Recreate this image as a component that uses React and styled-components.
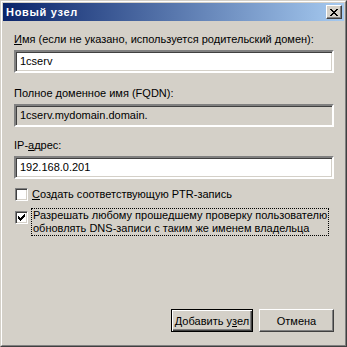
import React from "react";
import styled, { createGlobalStyle } from "styled-components";

const GlobalStyle = createGlobalStyle`
  html, body {
    margin: 0;
    padding: 0;
    background: #d4d0c8;
  }
  body {
    font-family: "Liberation Sans", Arial, sans-serif;
    font-size: 11px;
    color: #000;
  }
`;

const Window = styled.div`
  box-sizing: border-box;
  width: 347px;
  height: 347px;
  border: 1px solid;
  border-color: #d4d0c8 #404040 #404040 #d4d0c8;
  background: #d4d0c8;
`;

const WindowInner = styled.div`
  box-sizing: border-box;
  height: 100%;
  border: 1px solid;
  border-color: #ffffff #808080 #808080 #ffffff;
  padding: 1px;
  display: flex;
  flex-direction: column;
`;

const TitleBar = styled.div`
  height: 18px;
  flex: none;
  display: flex;
  align-items: center;
  justify-content: space-between;
  padding: 0 2px 0 3px;
  background: linear-gradient(to right, #0a246a, #a6caf0);
  color: #fff;
  font-weight: bold;
  letter-spacing: 0.7px;
`;

const CloseButton = styled.div`
  box-sizing: border-box;
  width: 16px;
  height: 14px;
  background: #d4d0c8;
  border: 1px solid;
  border-color: #ffffff #404040 #404040 #ffffff;
  box-shadow: inset -1px -1px 0 #808080;
  display: flex;
  align-items: center;
  justify-content: center;
`;

const Content = styled.div`
  flex: 1;
  display: flex;
  flex-direction: column;
  padding: 12px 10px 12px 11px;
`;

const Label = styled.div`
  line-height: 13px;
  height: 13px;
  white-space: nowrap;
  margin-bottom: 4px;
  margin-top: ${(p) => p.$top || 0}px;
`;

const Field = styled.div`
  box-sizing: border-box;
  height: 23px;
  border: 2px solid;
  border-color: #808080 #ffffff #ffffff #808080;
  box-shadow: inset 1px 1px 0 #404040, inset -1px -1px 0 #d4d0c8;
  background: ${(p) => (p.$readOnly ? "#d4d0c8" : "#ffffff")};
  padding: 0 4px;
  display: flex;
  align-items: center;
  line-height: 13px;
`;

const CheckRow = styled.div`
  display: flex;
  align-items: flex-start;
  margin-top: ${(p) => p.$top || 0}px;
  padding-left: 1px;
`;

const Box = styled.div`
  box-sizing: border-box;
  flex: none;
  width: 13px;
  height: 13px;
  margin-top: ${(p) => p.$top || 0}px;
  border: 1px solid;
  border-color: #808080 #ffffff #ffffff #808080;
  box-shadow: inset 1px 1px 0 #404040, inset -1px -1px 0 #d4d0c8;
  background: #fff;
  display: flex;
  align-items: center;
  justify-content: center;
`;

const CheckText = styled.div`
  margin-left: ${(p) => (p.$focused ? 3 : 4)}px;
  line-height: 13px;
  padding: ${(p) => (p.$focused ? "0 1px 0 1px" : "0")};
  border: ${(p) => (p.$focused ? "1px dotted #000" : "none")};
  white-space: nowrap;
`;

const ButtonRow = styled.div`
  margin-top: auto;
  display: flex;
  justify-content: flex-end;
  gap: 6px;
`;

const Button = styled.div`
  box-sizing: border-box;
  width: ${(p) => p.$width}px;
  height: 23px;
  background: #d4d0c8;
  border: 1px solid;
  border-color: ${(p) =>
    p.$default ? "#000" : "#ffffff #404040 #404040 #ffffff"};
  box-shadow: ${(p) =>
    p.$default
      ? "inset 1px 1px 0 #fff, inset -1px -1px 0 #404040, inset -2px -2px 0 #808080"
      : "inset -1px -1px 0 #808080"};
  display: flex;
  align-items: center;
  justify-content: center;
  white-space: nowrap;
`;

const CheckMark = () => (
  <svg width="7" height="7" viewBox="0 0 7 7" shapeRendering="crispEdges">
    <path
      fill="#000"
      d="M6 0h1v3h-1zM5 1h1v3h-1zM4 2h1v3h-1zM3 3h1v3h-1zM2 4h1v3h-1zM1 3h1v3h-1zM0 2h1v3h-1z"
    />
  </svg>
);

const CloseIcon = () => (
  <svg width="8" height="7" viewBox="0 0 8 7" shapeRendering="crispEdges">
    <path
      fill="#000"
      d="M0 0h2v1h-2zM6 0h2v1h-2zM1 1h2v1h-2zM5 1h2v1h-2zM2 2h4v1h-4zM3 3h2v1h-2zM2 4h4v1h-4zM1 5h2v1h-2zM5 5h2v1h-2zM0 6h2v1h-2zM6 6h2v1h-2z"
    />
  </svg>
);

export default function App() {
  return (
    <>
      <GlobalStyle />
      <Window>
        <WindowInner>
          <TitleBar>
            <span>Новый узел</span>
            <CloseButton>
              <CloseIcon />
            </CloseButton>
          </TitleBar>
          <Content>
            <Label>
              <u>И</u>мя (если не указано, используется родительский домен):
            </Label>
            <Field>1cserv</Field>
            <Label $top={14}>Полное доменное имя (FQDN):</Label>
            <Field $readOnly>1cserv.mydomain.domain.</Field>
            <Label $top={12}>
              IP-<u>а</u>дрес:
            </Label>
            <Field>192.168.0.201</Field>
            <CheckRow $top={9}>
              <Box />
              <CheckText>
                <u>С</u>оздать соответствующую PTR-запись
              </CheckText>
            </CheckRow>
            <CheckRow $top={7}>
              <Box $top={3}>
                <CheckMark />
              </Box>
              <CheckText $focused>
                Разрешать любому прошедшему проверку пользователю
                <br />
                обновлять DNS-записи с таким же именем владельца
              </CheckText>
            </CheckRow>
            <ButtonRow>
              <Button $default $width={82}>
                Добавить у<u>з</u>ел
              </Button>
              <Button $width={75}>Отмена</Button>
            </ButtonRow>
          </Content>
        </WindowInner>
      </Window>
    </>
  );
}
